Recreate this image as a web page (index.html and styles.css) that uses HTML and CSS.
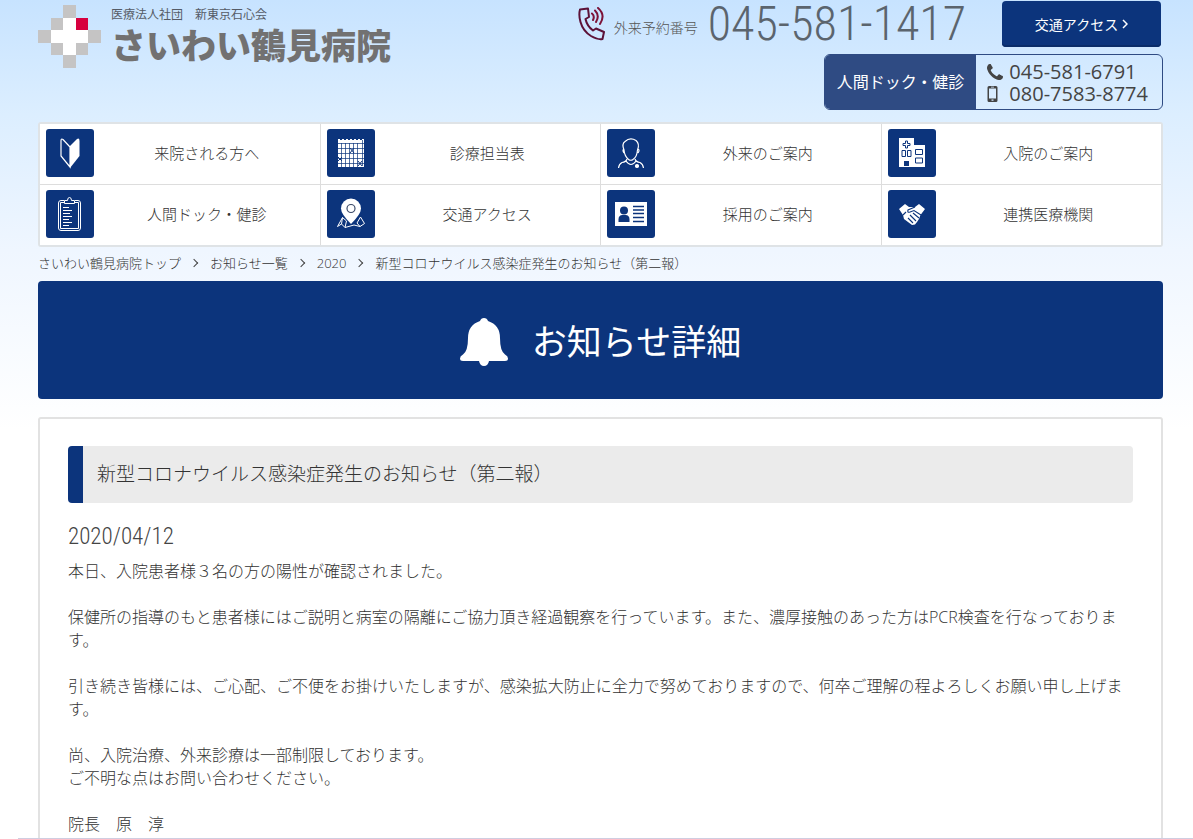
FILE: index.html
```html
<!DOCTYPE html>
<html lang="ja">
<head>
    <meta charset="utf-8">
    <meta name="viewport" content="width=device-width, initial-scale=1">
    <title>新型コロナウイルス感染症発生のお知らせ（第二報） | さいわい鶴見病院</title>
    <link rel="stylesheet" href="styles.css">
</head>
<body>
    <div class="container">
        <header class="header">
            <a class="logo" href="#">
                <svg class="logo-mark" viewBox="0 0 5 5" shape-rendering="crispEdges" aria-hidden="true">
                    <path fill="#fff" d="M2 1h1v1h1v1H3v1H2V3H1V2h1z"/>
                    <path fill="#c5c4c4" d="M2 0h1v1H2zM1 1h1v1H1zM0 2h1v1H0zM4 2h1v1H4zM1 3h1v1H1zM3 3h1v1H3zM2 4h1v1H2z"/>
                    <path fill="#d7003f" d="M3 1h1v1H3z"/>
                </svg>
                <span class="logo-text">
                    <span class="logo-sub">医療法人社団　新東京石心会</span>
                    <span class="logo-name">さいわい鶴見病院</span>
                </span>
            </a>
            <div class="contact">
                <div class="contact-main">
                    <svg class="call-icon" viewBox="0 0 28 34" fill="none" stroke="#5c1238" stroke-width="2" stroke-linecap="round" stroke-linejoin="round" aria-hidden="true">
                        <path d="M2 2.500 L10 1.500 L11 10 L7.500 12 Q9 19 15 23.500 L18 21.500 L26 25 L24.500 32 Q20 33 13 29 Q5 24 2.500 15 Q0.500 8 2 2.500z"/>
                        <path d="M14 6.500Q17 9 15 13M17 3.500Q22 8.500 18 15M20 1Q28 8 22 17" stroke="#7c1238"/>
                    </svg>
                    <span class="contact-label">外来予約番号</span>
                    <a class="contact-number" href="tel:0455811417">045-581-1417</a>
                    <a class="access-button" href="#">交通アクセス
                        <svg class="chevron" viewBox="0 0 6 10" aria-hidden="true"><path d="M1 1l4 4-4 4" fill="none" stroke="currentColor" stroke-width="1.500"/></svg>
                    </a>
                </div>
                <div class="dock">
                    <a class="dock-label" href="#">人間ドック・健診</a>
                    <div class="dock-numbers">
                        <a href="tel:0455816791">
                            <svg class="dock-icon" viewBox="0 0 1408 1408" aria-hidden="true"><path fill="currentColor" d="M1408 1112q0 27-10 70.500t-21 68.500q-21 50-122 106-94 51-186 51-27 0-53-3.500t-57-12.500-47-14.500-55.500-20.500-49.500-18q-98-35-175-83-127-79-264-216t-216-264q-48-77-83-175-3-9-18-49.500t-20.500-55.500-14.500-47-12.500-57-3.500-53q0-92 51-186 56-101 106-122 25-11 68.500-21t70.500-10q14 0 21 3 18 6 53 76 11 19 30 54t35 63.500 31 53.500q3 4 17.500 25t21.500 35.500 7 28.500q0 20-28.500 50t-62 55-62 53-28.500 46q0 9 5 22.500t8.500 20.500 14 24 11.500 19q76 137 174 235t235 174q2 1 19 11.500t24 14 20.500 8.500 22.500 5q18 0 46-28.500t53-62 55-62 50-28.500q14 0 28.500 7t35.500 21.500 25 17.500q25 15 53.500 31t63.500 35 54 30q70 35 76 53 3 7 3 21z"/></svg>
                            045-581-6791
                        </a>
                        <a href="tel:08075838774">
                            <svg class="dock-icon" viewBox="0 0 16 16" aria-hidden="true"><path fill="currentColor" fill-rule="evenodd" d="M2 0h7q1.500 0 1.500 1.500v13q0 1.500-1.500 1.500H2Q.5 16 .5 14.500v-13Q.5 0 2 0zM2 2.500v10h7v-10zM4.500 13.500v1.200h2v-1.200zM4 .8v.7h3V.8z"/></svg>
                            080-7583-8774
                        </a>
                    </div>
                </div>
            </div>
        </header>

        <nav class="menu">
            <a class="menu-item" href="#">
                <svg class="menu-icon" viewBox="0 0 48 48" aria-hidden="true">
                    <path d="M24 18L17 10.500Q15 9 15 12V27L24 38z" fill="none" stroke="#fff" stroke-width="1.200"/>
                    <path d="M24 17L31 10Q33.500 8.500 33.500 12V27L24 39z" fill="#fff"/>
                </svg>
                <span>来院される方へ</span>
            </a>
            <a class="menu-item" href="#">
                <svg class="menu-icon" viewBox="0 0 48 48" aria-hidden="true">
                    <path fill="#fff" d="M11 10h2v1h2v-1h2v1h2v-1h2v1h2v-1h2v1h2v-1h2v1h2v-1h2v1h2v-1h2v28H11z"/>
                    <path d="M11 14.500h26M11 19.500h26M11 24.500h26M11 29.500h26M11 34.500h26M14.500 14v24M18.500 14v24M22.500 14v24M26.500 14v24M30.500 14v24M35.500 11v26" stroke="#0c347c" stroke-opacity=".7" fill="none"/>
                    <path d="M23 19l4 5m0-5l-4 5M11 28l4 4m0-4l-4 4M31 32l4 5m0-5l-4 5" stroke="#0c347c" fill="none"/>
                </svg>
                <span>診療担当表</span>
            </a>
            <a class="menu-item" href="#">
                <svg class="menu-icon" viewBox="0 0 48 48" fill="none" stroke="#fff" stroke-width="1.200" aria-hidden="true">
                    <path d="M17 21Q14.500 15 18 12.500Q23 8 29 11.500Q33 15 30.500 21Q30 28 26 30.500Q24 32 21.500 30.500Q17.500 27 17 21zM17 20q-2 1 0 4M31 20q2 1 0 4"/>
                    <path d="M20 30Q19 33 15 33.500Q12 35 11.500 39M28 30Q29 33 33 33.500Q36 35 36.500 39M19 32Q24 39 29 32"/>
                    <circle cx="30" cy="37" r="1.500" fill="#fff"/>
                </svg>
                <span>外来のご案内</span>
            </a>
            <a class="menu-item" href="#">
                <svg class="menu-icon" viewBox="0 0 48 48" aria-hidden="true">
                    <path fill="#fff" d="M11 9h15v7h11v22H11z"/>
                    <path d="M17.500 12h2v2.500H22v2h-2.500V19h-2v-2.500H15v-2h2.500zM14 21.500h3.500v6H14zM19.500 21.500H23v6h-3.500zM27.500 20.500h7v5h-7zM27.500 29h7v5h-7z" fill="none" stroke="#0c347c"/>
                    <path fill="#0c347c" d="M16 32h5v5h-5z"/>
                </svg>
                <span>入院のご案内</span>
            </a>
            <a class="menu-item" href="#">
                <svg class="menu-icon" viewBox="0 0 48 48" fill="none" stroke="#fff" aria-hidden="true">
                    <path d="M18 10.500h-3q-2.500 0-2.500 2.500v25q0 2.500 2.500 2.500h17q2.500 0 2.500-2.500V13q0-2.500-2.500-2.500h-3M18 12.500h-3.500V38.500H32.500V12.500H29"/>
                    <path d="M18.500 13.500v-3h3q0-3 2-3t2 3h3v3z"/>
                    <path d="M17 17.500h6M17 20.500h9M17 23.500h7M17 26.500h9M17 29.500h6M17 32.500h9M17 35.500h6"/>
                </svg>
                <span>人間ドック・健診</span>
            </a>
            <a class="menu-item" href="#">
                <svg class="menu-icon" viewBox="0 0 48 48" aria-hidden="true">
                    <path d="M15.500 27.500L10.500 36.500L14.500 34L18 37.500L27 35L33 36.500L37.500 33.500L33.500 27L30 33L33 36.500M15.500 27.500L14.500 34M15.500 27.500L19.500 31L18 37.500" fill="none" stroke="#fff"/>
                    <path fill="#fff" d="M24 34Q14 24 14 18.500a10 10 0 0 1 20 0Q34 24 24 34z"/>
                    <circle cx="24" cy="18.500" r="4" fill="none" stroke="#3b4a68" stroke-width="1.200"/>
                </svg>
                <span>交通アクセス</span>
            </a>
            <a class="menu-item" href="#">
                <svg class="menu-icon" viewBox="0 0 48 48" aria-hidden="true">
                    <path fill="#fff" d="M8 12h32v24H8z"/>
                    <circle cx="17" cy="20.500" r="4" fill="#0c347c"/>
                    <path fill="#0c347c" d="M11.500 32v-2.500q0-4.500 4-4.500h3q4 0 4 4.500V32z"/>
                    <path d="M26 16.500h11M26 20h11M26 23.500h11M26 27.500h11M26 31.500h11" stroke="#0c347c" stroke-width="1.300"/>
                </svg>
                <span>採用のご案内</span>
            </a>
            <a class="menu-item" href="#">
                <svg class="menu-icon" viewBox="0 0 48 48" aria-hidden="true">
                    <path fill="#fff" d="M11 19L17 14L21 17H27L31 14L37 19L32.500 25L31 29L29 32L27 34.500L24 35L20 32L16 29L15 25z"/>
                    <path d="M27 17L20 20Q19 23 22 22L26 20.500L33 25M25 23L31 28M22 25L28 31M20 28L25 33M15 25L18 22" fill="none" stroke="#0c347c" stroke-width="1.100"/>
                </svg>
                <span>連携医療機関</span>
            </a>
        </nav>

        <ol class="breadcrumb">
            <li><a href="#">さいわい鶴見病院トップ</a></li>
            <li><a href="#">お知らせ一覧</a></li>
            <li><a href="#">2020</a></li>
            <li>新型コロナウイルス感染症発生のお知らせ（第二報）</li>
        </ol>

        <div class="page-title">
            <svg class="bell" viewBox="0 0 48 48" aria-hidden="true">
                <path fill="#fff" d="M24 0Q27 0 28 3Q40 7 40 20Q40 33 45 36.500Q48 38 48 40.500Q48 43 45 43H29Q28 48 24 48Q20 48 19 43H3Q0 43 0 40.500Q0 38 3 36.500Q8 33 8 20Q8 7 20 3Q21 0 24 0z"/>
            </svg>
            <h1>お知らせ詳細</h1>
        </div>

        <main class="card">
            <h2 class="card-title">新型コロナウイルス感染症発生のお知らせ（第二報）</h2>
            <time class="date" datetime="2020-04-12">2020/04/12</time>
            <div class="article">
                <p>本日、入院患者様３名の方の陽性が確認されました。</p>
                <p>保健所の指導のもと患者様にはご説明と病室の隔離にご協力頂き経過観察を行っています。また、濃厚接触のあった方はPCR検査を行なっております。</p>
                <p>引き続き皆様には、ご心配、ご不便をお掛けいたしますが、感染拡大防止に全力で努めておりますので、何卒ご理解の程よろしくお願い申し上げます。</p>
                <p>尚、入院治療、外来診療は一部制限しております。<br>ご不明な点はお問い合わせください。</p>
                <p>院長　原　淳</p>
            </div>
        </main>
    </div>
    <div class="bottom-line"></div>
</body>
</html>
```
FILE: styles.css
```css
* {
    box-sizing: border-box;
}
body {
    margin: 0;
    font-family: "Open Sans", "Noto Sans CJK JP", sans-serif;
    font-size: 16px;
    font-weight: 300;
    line-height: 23px;
    color: #333;
    background: #fff linear-gradient(#c7e3ff 0, #dceeff 115px, #eff6ff 250px, #fff 430px) no-repeat;
}
a {
    color: inherit;
    text-decoration: none;
}
svg {
    display: block;
    flex: none;
}
.container {
    padding: 0 30px 0 38px;
}

/* header */
.header {
    display: flex;
    justify-content: space-between;
    align-items: flex-start;
    height: 122px;
}
.logo {
    display: flex;
    gap: 10px;
    padding-top: 5px;
}
.logo-mark {
    width: 63px;
    height: 63px;
}
.logo-sub,
.logo-name {
    display: block;
    white-space: nowrap;
}
.logo-sub {
    font-size: 12px;
    font-weight: 400;
    line-height: 20px;
    color: #555b66;
}
.logo-name {
    font-size: 35px;
    font-weight: 900;
    line-height: 42px;
    color: #727171;
}
.contact {
    display: flex;
    flex-direction: column;
    align-items: flex-end;
    gap: 6px;
}
.contact-main {
    display: flex;
    align-items: center;
    height: 48px;
    padding-right: 2px;
    white-space: nowrap;
}
.call-icon {
    width: 28px;
    height: 34px;
    margin-right: 8px;
}
.contact-label {
    margin-right: 10px;
    padding-top: 7px;
    font-size: 14px;
    color: #555;
}
.contact-number {
    margin-right: 36px;
    font-family: "Roboto Condensed", Roboto, sans-serif;
    font-size: 48px;
    line-height: 48px;
    color: #5b646d;
}
.access-button {
    display: flex;
    align-items: center;
    justify-content: center;
    gap: 4px;
    width: 159px;
    height: 46px;
    border-radius: 4px;
    background: #0c347c;
    box-shadow: inset 0 -2px 0 #0a2c69;
    color: #fff;
    font-size: 14px;
    font-weight: 400;
}
.chevron {
    width: 6px;
    height: 10px;
}
.dock {
    display: flex;
    height: 56px;
    border: 1px solid #2f4b83;
    border-radius: 6px;
    overflow: hidden;
    white-space: nowrap;
}
.dock-label {
    display: flex;
    align-items: center;
    padding: 0 12px;
    background: #2f4b83;
    color: #fff;
    font-weight: 400;
}
.dock-numbers {
    display: flex;
    flex-direction: column;
    justify-content: center;
    padding: 2px 14px 0 11px;
    font-size: 20px;
    font-weight: 400;
    line-height: 22px;
    color: #444;
}
.dock-numbers a {
    display: flex;
    align-items: center;
    gap: 6px;
}
.dock-icon {
    width: 16px;
    height: 16px;
}

/* menu */
.menu {
    display: grid;
    grid-template-columns: repeat(4, 1fr);
    gap: 1px;
    border: 2px solid #dfe3e6;
    border-radius: 3px;
    background: #ddd;
}
.menu-item {
    display: flex;
    align-items: center;
    height: 60px;
    padding: 0 0 2px 6px;
    background: #fff;
    font-size: 15px;
}
.menu-item span {
    flex: 1;
    text-align: center;
}
.menu-icon {
    width: 48px;
    height: 48px;
    border-radius: 3px;
    background: #0c347c;
}

/* breadcrumb */
.breadcrumb {
    display: flex;
    margin: 0;
    padding: 5px 0 6px;
    list-style: none;
    font-size: 13px;
    line-height: 23px;
}
.breadcrumb li + li::before {
    content: "";
    display: inline-block;
    width: 5px;
    height: 5px;
    margin: 0 13px 2px 10px;
    border: solid #444;
    border-width: 1px 1px 0 0;
    transform: rotate(45deg);
}

/* page title */
.page-title {
    display: flex;
    align-items: center;
    justify-content: center;
    gap: 24px;
    height: 118px;
    padding-top: 4px;
    border-radius: 4px;
    background: #0c347c;
    color: #fff;
}
.page-title h1 {
    margin: 0;
    font-size: 35px;
    font-weight: 400;
    line-height: 48px;
}
.bell {
    width: 48px;
    height: 48px;
}

/* article */
.card {
    margin-top: 18px;
    padding: 27px 28px 30px;
    border: 2px solid #e2e2e2;
    border-radius: 3px;
    background: #fff;
}
.card-title {
    margin: 0 0 20px;
    padding: 14px;
    border-left: 15px solid #0c347c;
    border-radius: 4px;
    background: #ebebeb;
    font-size: 19px;
    font-weight: 300;
    line-height: 29px;
}
.date {
    display: block;
    margin-bottom: 9px;
    font-family: "Roboto Condensed", Roboto, sans-serif;
    font-size: 23px;
    line-height: 28px;
    color: #444;
}
.article p {
    margin: 0 0 23px;
}
.bottom-line {
    position: fixed;
    right: 0;
    bottom: 0;
    left: 18px;
    height: 1px;
    background: #cfcde0;
}
```
